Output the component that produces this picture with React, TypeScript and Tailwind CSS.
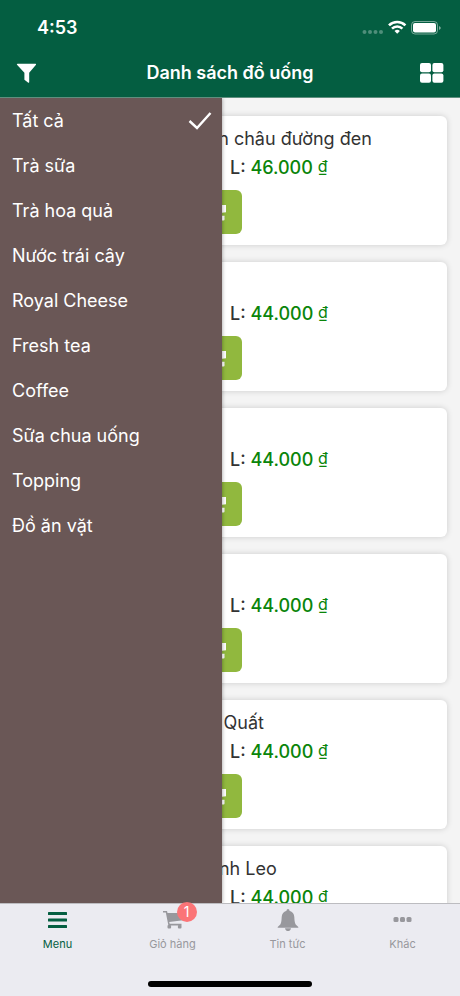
import React, { useState } from "react";

interface Drink {
  id: number;
  name?: string;
  price: string;
}

const categories = [
  "Tất cả",
  "Trà sữa",
  "Trà hoa quả",
  "Nước trái cây",
  "Royal Cheese",
  "Fresh tea",
  "Coffee",
  "Sữa chua uống",
  "Topping",
  "Đồ ăn vặt",
];

const drinks: Drink[] = [
  { id: 1, name: "Sữa tươi trân châu đường đen", price: "46.000" },
  { id: 2, price: "44.000" },
  { id: 3, price: "44.000" },
  { id: 4, price: "44.000" },
  { id: 5, name: "Trà Đào Vải Quất", price: "44.000" },
  { id: 6, name: "Lục trà Chanh Leo", price: "44.000" },
];

const CartIcon = ({ className }: { className: string }) => (
  <svg viewBox="0 0 20 18" fill="currentColor" className={className} aria-hidden="true">
    <path d="M0 0h4l.5 2H20v7.200L6.200 11l.5 1.800H18.500v1.700H5.400L2.800 1.500H0z" />
    <rect x="4.500" y="14" width="3.600" height="3.600" rx="1" />
    <rect x="14.900" y="14" width="3.600" height="3.600" rx="1" />
  </svg>
);

const StatusBar = () => (
  <div className="flex h-12 items-center justify-between pt-2 pr-[18px] pl-[37px]">
    <span className="text-lg font-semibold">4:53</span>
    <svg viewBox="0 0 80 16" className="h-4 w-20" fill="white" aria-hidden="true">
      <g fillOpacity="0.3">
        <circle cx="2.500" cy="12" r="2" />
        <circle cx="8" cy="12" r="2" />
        <circle cx="13.500" cy="12" r="2" />
        <circle cx="19" cy="12" r="2" />
      </g>
      <g fill="none" stroke="white" strokeWidth="2.600">
        <path d="M27 5.400a11.600 11.600 0 0 1 16.400 0" />
        <path d="M30 8.700a7.400 7.400 0 0 1 10.400 0" />
      </g>
      <path d="M35.200 13.800l-2.700-2.800a4 4 0 0 1 5.400 0z" />
      <rect x="49.500" y="1.500" width="26" height="12.500" rx="3.500" fill="none" stroke="white" strokeOpacity="0.45" />
      <rect x="51" y="3" width="23" height="9.500" rx="2" />
      <path d="M77 6v4q1.800-.8 1.800-2T77 6z" fillOpacity="0.5" />
    </svg>
  </div>
);

const Header = () => (
  <header className="shrink-0 border-b border-[#5f8f7e] bg-[#045e41] text-white">
    <StatusBar />
    <div className="flex h-[49px] items-center justify-between px-4">
      <button type="button" aria-label="Lọc" className="w-6">
        <svg viewBox="0 0 20 20" fill="currentColor" className="h-5 w-5" aria-hidden="true">
          <path d="M1.500.8h18q1 0 .5 1L13.200 9.700V19q0 1-.9.700L8.400 16.700V9.700L1 1.800Q.5.8 1.500.8z" />
        </svg>
      </button>
      <h1 className="text-lg font-semibold">Danh sách đồ uống</h1>
      <button type="button" aria-label="Dạng lưới" className="w-6">
        <svg viewBox="0 0 24 20" fill="currentColor" className="h-5 w-6" aria-hidden="true">
          <rect x="0" y="0" width="11" height="9.200" rx="2" />
          <rect x="12.400" y="0" width="11" height="9.200" rx="2" />
          <rect x="0" y="10.600" width="11" height="9.200" rx="2" />
          <rect x="12.400" y="10.600" width="11" height="9.200" rx="2" />
        </svg>
      </button>
    </div>
  </header>
);

const DrinkCard = ({ drink }: { drink: Drink }) => (
  <li className="rounded-md bg-white pt-2 pr-3 pb-[11px] pl-[109px] shadow-[0_0_6px_rgba(0,0,0,0.16)]">
    <h2 className="h-[30px] text-lg leading-[30px] whitespace-nowrap text-[#333]">{drink.name}</h2>
    <p className="pl-[109px] text-lg leading-7 font-medium whitespace-nowrap text-[#333]">
      L: <span className="text-[#0a850a]">{drink.price}</span>{" "}
      <span className="align-[2px] text-base leading-none font-normal text-[#0a850a]">₫</span>
    </p>
    <div className="flex w-[121px] justify-end pt-2">
      <button
        type="button"
        aria-label="Thêm vào giỏ"
        className="flex h-11 w-[52px] items-center justify-center rounded-md bg-[#91b83e] text-white"
      >
        <CartIcon className="h-[18px] w-5" />
      </button>
    </div>
  </li>
);

interface DrawerProps {
  selected: string;
  onSelect: (name: string) => void;
}

const CategoryDrawer: React.FC<DrawerProps> = ({ selected, onSelect }) => (
  <nav className="absolute inset-y-0 left-0 w-[222px] bg-[#6a5756] text-white shadow-[0_0_4px_rgba(0,0,0,0.4)]">
    {categories.map((name) => (
      <button
        key={name}
        type="button"
        onClick={() => onSelect(name)}
        className="flex h-[45px] w-full items-center justify-between pr-2 pl-3 text-lg"
      >
        {name}
        {selected === name && (
          <svg viewBox="0 0 28 20" fill="none" stroke="currentColor" strokeWidth="2.400" className="h-5 w-7" aria-hidden="true">
            <path d="M3.500 10l7.500 7L24.500 2" />
          </svg>
        )}
      </button>
    ))}
  </nav>
);

const TabBar = () => (
  <nav className="grid h-[93px] shrink-0 grid-cols-4 border-t border-[#bcbcc0] bg-[#ebebf1] text-[11px] text-[#98989d]">
    <a href="#menu" className="flex flex-col items-center gap-1 pt-1 text-[#045e41]">
      <svg viewBox="0 0 20 24" fill="currentColor" className="h-6 w-5" aria-hidden="true">
        <rect x="0" y="4" width="19" height="3" rx="0.500" />
        <rect x="0" y="10.500" width="19" height="3" rx="0.500" />
        <rect x="0" y="17" width="19" height="3" rx="0.500" />
      </svg>
      <span>Menu</span>
    </a>
    <a href="#cart" className="flex flex-col items-center gap-1 pt-1">
      <span className="relative flex h-6 items-center">
        <CartIcon className="h-[18px] w-5" />
        <span className="absolute -top-[6px] left-[14px] flex h-5 w-5 items-center justify-center rounded-full bg-[#fb7477] text-sm text-white">
          1
        </span>
      </span>
      <span>Giỏ hàng</span>
    </a>
    <a href="#news" className="flex flex-col items-center gap-1 pt-1">
      <svg viewBox="0 0 22 24" fill="currentColor" className="h-6 w-[22px]" aria-hidden="true">
        <path d="M11 1q1.500 0 1.500 1.700Q17 4 17.300 9q.2 5.500 1.400 7.500L21.300 19v.8H.7V19l2.600-2.500Q4.500 14.500 4.700 9 5 4 9.500 2.700 9.500 1 11 1z" />
        <path d="M8 20.200h6Q13.500 23 11 23t-3-2.800z" />
      </svg>
      <span>Tin tức</span>
    </a>
    <a href="#more" className="flex flex-col items-center gap-1 pt-1">
      <svg viewBox="0 0 20 24" fill="currentColor" className="h-6 w-5" aria-hidden="true">
        <rect x="0.500" y="9" width="5" height="5" rx="1.500" />
        <rect x="7" y="9" width="5" height="5" rx="1.500" />
        <rect x="13.500" y="9" width="5" height="5" rx="1.500" />
      </svg>
      <span>Khác</span>
    </a>
    <div className="col-span-4 flex items-end justify-center pb-[9px]">
      <div className="h-[6px] w-[164px] rounded-full bg-black" />
    </div>
  </nav>
);

export default function App() {
  const [category, setCategory] = useState("Tất cả");

  return (
    <div className="flex h-screen flex-col overflow-hidden bg-[#f4f4f4] font-[Inter,sans-serif]">
      <Header />
      <main className="relative min-h-0 flex-1 overflow-hidden">
        <ul className="flex flex-col gap-[17px] py-[18px] pr-[13px] pl-3">
          {drinks.map((drink) => (
            <DrinkCard key={drink.id} drink={drink} />
          ))}
        </ul>
        <CategoryDrawer selected={category} onSelect={setCategory} />
      </main>
      <TabBar />
    </div>
  );
}
